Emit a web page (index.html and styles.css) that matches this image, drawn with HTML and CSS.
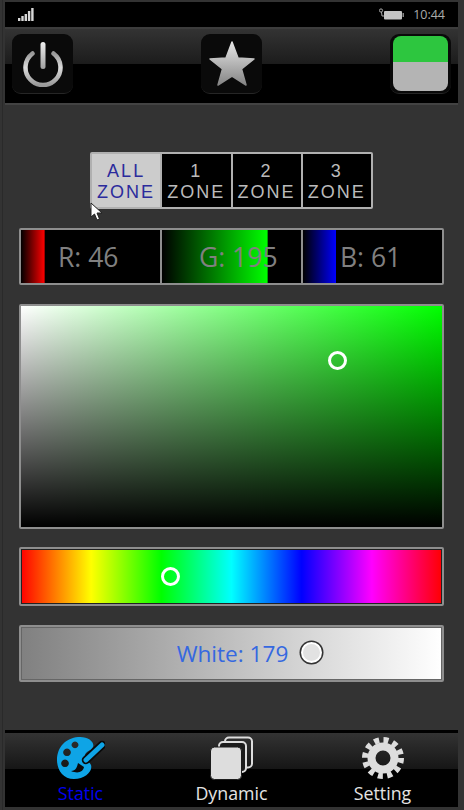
FILE: index.html
```html
<!DOCTYPE html>
<html lang="en">
<head>
  <meta charset="UTF-8">
  <title>Light Control</title>
  <link rel="stylesheet" href="styles.css">
</head>
<body>
  <div class="app">
    <div class="status-bar">
      <svg class="signal" width="16" height="13" viewBox="0 0 16 13">
        <rect x="0" y="10" width="2.4" height="3" />
        <rect x="3.3" y="8" width="2.4" height="5" />
        <rect x="6.6" y="6" width="2.4" height="7" />
        <rect x="9.9" y="3" width="2.4" height="10" />
        <rect x="13.2" y="0" width="2.4" height="13" />
      </svg>
      <svg class="battery" width="25" height="13" viewBox="0 0 25 13">
        <circle cx="2" cy="2.5" r="1.6" fill="none" stroke="#aaa" />
        <path d="M2.5 4 L3 8 H5" fill="none" stroke="#aaa" />
        <rect x="5" y="3" width="18" height="8.5" rx="1" fill="#c4c4c4" />
        <rect x="23.5" y="5" width="1.5" height="4" fill="#888" />
      </svg>
      <span class="clock">10:44</span>
    </div>

    <header class="toolbar">
      <button class="tool-btn">
        <svg width="42" height="46" viewBox="0 0 42 46">
          <defs>
            <linearGradient id="metal" x1="0" y1="0" x2="0" y2="1">
              <stop offset="0" stop-color="#999" />
              <stop offset="0.45" stop-color="#dcdcdc" />
              <stop offset="1" stop-color="#9a9a9a" />
            </linearGradient>
            <linearGradient id="bar" gradientUnits="userSpaceOnUse" x1="0" y1="0" x2="0" y2="28">
              <stop offset="0" stop-color="#f2f2f2" />
              <stop offset="1" stop-color="#a0a0a0" />
            </linearGradient>
          </defs>
          <path d="M10.5 12.5 A17.5 17.5 0 1 0 31.5 12.5" fill="none" stroke="url(#metal)" stroke-width="4.5" stroke-linecap="round" />
          <rect x="18.5" y="1" width="5" height="27" rx="2.5" fill="url(#bar)" />
        </svg>
      </button>
      <button class="tool-btn">
        <svg width="48" height="46" viewBox="0 0 48 46">
          <defs>
            <linearGradient id="star" x1="0" y1="0" x2="0" y2="1">
              <stop offset="0" stop-color="#e6e6e6" />
              <stop offset="1" stop-color="#858585" />
            </linearGradient>
          </defs>
          <polygon points="24,1 30,17 46,18 33.5,28 38,44 24,35 10,44 14.5,28 2,18 18,17" fill="url(#star)" stroke="url(#star)" stroke-width="1.5" stroke-linejoin="round" />
        </svg>
      </button>
      <button class="tool-btn">
        <span class="swatch"></span>
      </button>
    </header>

    <main class="panel">
      <div class="zones">
        <div class="zone active">ALL<br>ZONE</div>
        <div class="zone">1<br>ZONE</div>
        <div class="zone">2<br>ZONE</div>
        <div class="zone">3<br>ZONE</div>
      </div>
      <svg class="cursor" width="14" height="20" viewBox="0 0 14 20">
        <path d="M1 1 V15 L4.5 12 L7 18 L9.5 17 L7 11 H12 Z" fill="#fff" stroke="#222" stroke-width="1" />
      </svg>

      <div class="rgb box">
        <div class="channel red" style="background-size: 17% 100%">R: 46</div>
        <div class="channel green" style="background-size: 76% 100%">G: 195</div>
        <div class="channel blue" style="background-size: 24% 100%">B: 61</div>
      </div>

      <div class="sv box">
        <span class="thumb sv-thumb"></span>
      </div>

      <div class="hue box">
        <span class="thumb hue-thumb"></span>
      </div>

      <div class="white box">
        <span class="white-label">White: 179</span>
        <span class="white-thumb"></span>
      </div>
    </main>

    <nav class="tabs">
      <a class="tab selected">
        <svg width="48" height="44" viewBox="0 0 48 44">
          <path fill-rule="evenodd" fill="#0ea4e6" d="M21 1 C31 0 38 6 36 11 C34 15 29 15 28 19 C27 24 32 25 34 29 C36 35 28 43 17 43 C6 43 0 34 0 24 C0 11 9 2 21 1 Z M18 5.5 A3.4 3.4 0 1 0 18.01 5.5 Z M10 12.5 A3.8 3.8 0 1 0 10.01 12.5 Z M8 23.5 A3.8 3.8 0 1 0 8.01 23.5 Z" />
          <path d="M45 9 L29 24" stroke="#0a0a0a" stroke-width="8.5" stroke-linecap="round" />
          <path d="M45 9 L29 24" stroke="#0ea4e6" stroke-width="5" stroke-linecap="round" />
          <path d="M14 35 C19 35 20 31 21 27 L27 31 C26 36 21 38 14 35 Z" fill="#0a0a0a" />
        </svg>
        <span>Static</span>
      </a>
      <a class="tab">
        <svg width="44" height="44" viewBox="0 0 44 44">
          <rect x="15" y="1.5" width="27" height="30" rx="4" fill="none" stroke="#ddd" stroke-width="2" />
          <rect x="9" y="6" width="27" height="30" rx="4" fill="#1c1c1c" stroke="#ddd" stroke-width="2" />
          <rect x="0.5" y="11" width="31" height="32.5" rx="4" fill="#ddd" stroke="#1c1c1c" stroke-width="1" />
        </svg>
        <span>Dynamic</span>
      </a>
      <a class="tab">
        <svg width="44" height="44" viewBox="0 0 44 44">
          <circle cx="22" cy="22" r="11.5" fill="none" stroke="#ddd" stroke-width="8" />
          <circle cx="22" cy="22" r="18" fill="none" stroke="#ddd" stroke-width="6" stroke-dasharray="5 4.42" />
        </svg>
        <span>Setting</span>
      </a>
    </nav>
  </div>
</body>
</html>
```

FILE: styles.css
```css
* { box-sizing: border-box; margin: 0; padding: 0; }
html, body { height: 100%; }
body {
  background: linear-gradient(90deg, #333 2px, #2a2a2a 2px, #2a2a2a 3px, #333 3px);
  background-color: #333;
  font-family: 'Open Sans', sans-serif;
  overflow: hidden;
}
.app {
  height: 810px;
  display: flex;
  flex-direction: column;
  padding: 2px 6px 3px 5px;
}

/* status bar */
.status-bar {
  height: 25px;
  flex: none;
  background: #000;
  display: flex;
  align-items: center;
  padding: 0 13px;
  color: #aaa;
}
.signal { fill: #d8d8d8; }
.battery { margin-left: auto; margin-right: 9px; }
.clock { font-size: 12.5px; }

/* top buttons */
.toolbar {
  flex: none;
  height: 78px;
  border-top: 2px solid #3c3c3c;
  border-bottom: 2px solid #434343;
  background: linear-gradient(180deg, #333 0, #1c1c1c 35px, #000 35px);
  display: flex;
  justify-content: space-between;
  padding: 5px 7px 0;
}
.tool-btn {
  width: 61px;
  height: 60px;
  background: #0a0a0a;
  border: none;
  border-bottom: 1px solid #262626;
  border-radius: 9px;
  display: flex;
  align-items: center;
  justify-content: center;
}
.swatch {
  display: block;
  width: 55px;
  height: 55px;
  border-radius: 8px;
  background: linear-gradient(180deg, #2dc63f 0, #2dc63f 48%, #b4b4b4 48%);
}

/* main panel */
.panel {
  flex: 1;
  position: relative;
  padding: 47px 14px 0 14px;
  display: flex;
  flex-direction: column;
}
.zones {
  align-self: center;
  width: 283px;
  height: 57px;
  display: flex;
  border: 2px solid #b0b0b0;
  border-radius: 2px;
  background: #000;
}
.zone {
  flex: 1;
  border-left: 2px solid #b0b0b0;
  color: #bbb;
  font-family: 'Liberation Sans', sans-serif;
  font-size: 18px;
  line-height: 21px;
  letter-spacing: 2px;
  text-align: center;
  padding-top: 7px;
}
.zone:first-child { border-left: none; }
.zone.active {
  background: #ccc;
  color: #2b2b9c;
}
.cursor {
  position: absolute;
  left: 85px;
  top: 97px;
}
.box {
  border: 2px solid #8e8e8e;
  border-radius: 2px;
  position: relative;
  flex: none;
}
.rgb {
  margin-top: 19px;
  height: 57px;
  display: flex;
  background: #000;
}
.channel {
  flex: 1;
  color: #808080;
  font-size: 26.5px;
  line-height: 55px;
  padding-left: 37px;
  background-repeat: no-repeat;
  border-left: 2px solid #8e8e8e;
  white-space: nowrap;
}
.channel:first-child { border-left: none; }
.red { background-image: linear-gradient(90deg, #000, #f00); }
.green { background-image: linear-gradient(90deg, #000, #0f0); }
.blue { background-image: linear-gradient(90deg, #000, #00f); }

.sv {
  margin-top: 19px;
  height: 225px;
  background: linear-gradient(0deg, #000, rgba(0,0,0,0)), linear-gradient(90deg, #fff, #0f0);
}
.hue {
  margin-top: 18px;
  height: 59px;
  background: linear-gradient(90deg, #f00, #ff0 16.67%, #0f0 33.33%, #0ff 50%, #00f 66.67%, #f0f 83.33%, #f00);
  box-shadow: inset 0 0 0 1px #222;
}
.thumb {
  position: absolute;
  width: 19px;
  height: 19px;
  border: 3px solid #fff;
  border-radius: 50%;
}
.sv-thumb { left: 307px; top: 45px; }
.hue-thumb { left: 140px; top: 18px; }

.white {
  margin-top: 19px;
  height: 57px;
  background: linear-gradient(90deg, #808080, #fff);
  box-shadow: inset 0 0 0 1px #666;
  display: flex;
  justify-content: center;
  align-items: center;
}
.white-label {
  color: #3568e0;
  font-size: 22.6px;
  margin-left: 2px;
}
.white-thumb {
  position: absolute;
  left: 280px;
  top: 15px;
  width: 21px;
  height: 21px;
  background: #e2e2e2;
  border: 2px solid #fff;
  box-shadow: 0 0 0 1.5px #333;
  border-radius: 50%;
}

/* bottom tabs */
.tabs {
  flex: none;
  height: 77px;
  border-top: 3px solid #000;
  background: linear-gradient(180deg, #333 0, #161616 36px, #000 36px);
  display: grid;
  grid-template-columns: repeat(3, 1fr);
}
.tab {
  display: flex;
  flex-direction: column;
  align-items: center;
  padding-top: 3px;
  color: #e4e4e4;
  font-size: 17.8px;
  line-height: 26px;
}
.tab.selected { color: #0000f0; }
```
